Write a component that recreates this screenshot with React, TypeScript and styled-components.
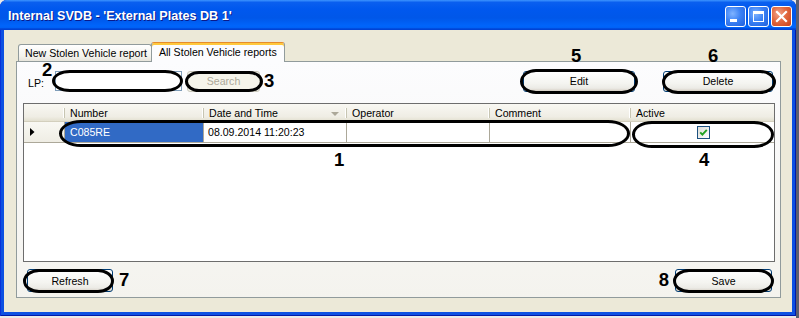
import React from "react";
import styled, { createGlobalStyle, css } from "styled-components";

const GlobalStyle = createGlobalStyle`
  html, body { margin: 0; padding: 0; }
  body { background: #e4e3df; font-family: "Liberation Sans", Arial, sans-serif; }
`;

const UI_FONT = `"Liberation Sans", Arial, sans-serif`;

const Screen = styled.div`
  width: 799px;
  height: 318px;
  overflow: hidden;
  background: linear-gradient(to right, #e9e9e9 0, #e9e9e9 796px, #5b5e6e 796px);
`;

const Window = styled.div`
  width: 796px;
  height: 316px;
  display: flex;
  flex-direction: column;
  background: #0c50e2;
  box-shadow: inset 1px 0 0 #0831d9, inset -1px 0 0 #0019a8, inset 0 -1px 0 #0019a8;
  border-radius: 7px 7px 0 0;
  overflow: hidden;
`;

const TitleBar = styled.div`
  height: 30px;
  flex: none;
  box-sizing: border-box;
  padding: 2px 4px 0 8px;
  display: flex;
  align-items: center;
  background: linear-gradient(
    to bottom,
    #3d95ff 0%,
    #0a5fef 8%,
    #0058ee 30%,
    #0057e9 60%,
    #0065fb 86%,
    #0062f6 92%,
    #0047d9 96%,
    #0040d2 100%
  );
`;

const Title = styled.div`
  flex: 1;
  color: #fff;
  font: bold 12.6px ${UI_FONT};
  text-shadow: 1px 1px 0 #0a1a8a;
  white-space: nowrap;
`;

const Controls = styled.div`
  display: flex;
  gap: 2px;
`;

const CtrlButton = styled.div<{ $close?: boolean }>`
  width: 21px;
  height: 21px;
  box-sizing: border-box;
  border: 1px solid #fff;
  border-radius: 3px;
  display: flex;
  align-items: center;
  justify-content: center;
  background: ${(p) =>
    p.$close
      ? "radial-gradient(circle at 35% 35%, #f0a48c 0%, #e2683f 45%, #c8411a 100%)"
      : "radial-gradient(circle at 35% 35%, #7fb3ff 0%, #3c82f5 45%, #1f5fdc 100%)"};
  svg { display: block; }
`;

const Client = styled.div`
  flex: 1;
  margin: 0 4px 4px 4px;
  background: #ece9d8;
  box-sizing: border-box;
  padding: 12px 11px 14px 12px;
  display: flex;
  flex-direction: column;
`;

const TabStrip = styled.div`
  display: flex;
  align-items: flex-end;
  height: 20px;
  padding-left: 2px;
  margin-bottom: -1px;
  position: relative;
  z-index: 1;
`;

const Tab = styled.div<{ $active?: boolean }>`
  box-sizing: border-box;
  font: 10.6px ${UI_FONT};
  color: #000;
  white-space: nowrap;
  border: 1px solid #919b9c;
  border-bottom: none;
  border-radius: 3px 3px 0 0;
  display: flex;
  align-items: center;
  ${(p) =>
    p.$active
      ? css`
          height: 20px;
          padding: 0 7px 1px 7px;
          background: #fcfcfe;
          border-top: 1px solid #e68b2c;
          box-shadow: inset 0 2px 0 #ffc83c;
          margin-left: -1px;
        `
      : css`
          height: 17px;
          margin-bottom: 1px;
          padding: 0 4px 0 6px;
          background: linear-gradient(#ffffff, #f3f2ec 70%, #e7e5dc);
        `}
`;

const Panel = styled.div`
  flex: 1;
  box-sizing: border-box;
  border: 1px solid #919b9c;
  background: linear-gradient(#fcfcfe, #f4f3ee);
  padding: 7px 5px 5px 6px;
  display: flex;
  flex-direction: column;
`;

const ToolRow = styled.div`
  height: 24px;
  display: flex;
  align-items: center;
`;

const FieldLabel = styled.span`
  font: 10.6px ${UI_FONT};
  color: #000;
  margin-left: 5px;
  width: 27px;
  padding-top: 3px;
`;

const Marked = styled.div<{ $w: number; $h: number }>`
  position: relative;
  width: ${(p) => p.$w}px;
  height: ${(p) => p.$h}px;
  flex: none;
`;

const Ring = styled.div<{ $inset: string; $radius?: string }>`
  position: absolute;
  inset: ${(p) => p.$inset};
  border: 3px solid #000;
  border-radius: ${(p) => p.$radius ?? "16px / 50%"};
  pointer-events: none;
  z-index: 3;
`;

const Num = styled.span`
  font: bold 18.5px ${UI_FONT};
  line-height: 1;
  color: #000;
`;

const FloatNum = styled(Num)<{ $left: number; $top: number }>`
  position: absolute;
  left: ${(p) => p.$left}px;
  top: ${(p) => p.$top}px;
  z-index: 4;
`;

const TextBox = styled.div`
  width: 100%;
  height: 100%;
  box-sizing: border-box;
  border: 1px solid #7f9db9;
  background: #fff;
`;

const Button = styled.div<{ $disabled?: boolean }>`
  width: 100%;
  height: 100%;
  box-sizing: border-box;
  border-radius: 3px;
  display: flex;
  align-items: center;
  justify-content: center;
  font: 10.6px ${UI_FONT};
  ${(p) =>
    p.$disabled
      ? css`
          border: 1px solid #c9c7ba;
          background: #f5f4ea;
          color: #aca899;
        `
      : css`
          border: 1px solid #003c74;
          background: linear-gradient(#ffffff 0%, #f4f4f0 60%, #ecebe6 85%, #d6d0c5 100%);
          color: #000;
        `}
`;

const Spacer = styled.div`
  flex: 1;
`;

const GridBox = styled.div`
  margin-top: 10px;
  height: 159px;
  box-sizing: border-box;
  border: 1px solid #6d6d6d;
  background: #fff;
  position: relative;
  display: grid;
  grid-template-columns: 41px 139px 143px 143px 141px 1fr;
  grid-template-rows: 18px 21px;
  align-content: start;
`;

const HeadCell = styled.div<{ $last?: boolean }>`
  position: relative;
  box-sizing: border-box;
  background: linear-gradient(#f9f8f3, #efede4 75%, #e3e0d0);
  border-bottom: 1px solid #d3cfbd;
  font: 10.6px ${UI_FONT};
  color: #000;
  padding-left: 5px;
  display: flex;
  align-items: center;
  ${(p) =>
    !p.$last &&
    css`
      &::after {
        content: "";
        position: absolute;
        right: 0;
        top: 4px;
        bottom: 3px;
        width: 1px;
        background: #c7c5b2;
        box-shadow: -1px 0 0 #fff;
      }
    `}
`;

const SortGlyph = styled.svg`
  position: absolute;
  right: 8px;
  top: 8px;
`;

const RowHead = styled.div`
  box-sizing: border-box;
  background: linear-gradient(#f9f8f3, #efede4);
  border-right: 1px solid #aca899;
  border-bottom: 1px solid #aca899;
  display: flex;
  align-items: center;
  padding-left: 6px;
`;

const Cell = styled.div<{ $selected?: boolean; $center?: boolean }>`
  box-sizing: border-box;
  border-right: 1px solid #aca899;
  border-bottom: 1px solid #aca899;
  font: 10.6px ${UI_FONT};
  display: flex;
  align-items: center;
  padding-left: 4px;
  white-space: nowrap;
  ${(p) =>
    p.$selected &&
    css`
      background: #316ac5;
      color: #fff;
      padding-left: 5px;
    `}
  ${(p) =>
    p.$center &&
    css`
      justify-content: center;
      padding-left: 0;
      border-right: none;
    `}
`;

const CheckBox = styled.div`
  width: 13px;
  height: 13px;
  box-sizing: border-box;
  border: 1px solid #1c5180;
  background: linear-gradient(135deg, #dcdcd7, #ffffff);
  display: flex;
  align-items: center;
  justify-content: center;
  margin-left: 1px;
  margin-top: 1px;
`;

const BottomRow = styled.div`
  margin-top: 7px;
  height: 23px;
  display: flex;
  align-items: center;
`;

export default function App() {
  return (
    <>
      <GlobalStyle />
      <Screen>
        <Window>
          <TitleBar>
            <Title>Internal SVDB - 'External Plates DB 1'</Title>
            <Controls>
              <CtrlButton>
                <svg width="19" height="19" viewBox="0 0 19 19">
                  <rect x="4" y="12" width="7" height="3" fill="#fff" />
                </svg>
              </CtrlButton>
              <CtrlButton>
                <svg width="19" height="19" viewBox="0 0 19 19">
                  <rect x="4.5" y="4.5" width="10" height="10" fill="none" stroke="#fff" strokeWidth="1" />
                  <rect x="4" y="4" width="11" height="3" fill="#fff" />
                </svg>
              </CtrlButton>
              <CtrlButton $close>
                <svg width="19" height="19" viewBox="0 0 19 19">
                  <path d="M5 5 L14 14 M14 5 L5 14" stroke="#fff" strokeWidth="2.2" strokeLinecap="square" />
                </svg>
              </CtrlButton>
            </Controls>
          </TitleBar>
          <Client>
            <TabStrip>
              <Tab>New Stolen Vehicle report</Tab>
              <Tab $active>All Stolen Vehicle reports</Tab>
            </TabStrip>
            <Panel>
              <ToolRow>
                <FieldLabel>LP:</FieldLabel>
                <Marked $w={127} $h={20}>
                  <TextBox />
                  <Ring $inset="-1px -1px -1px -3px" $radius="18px / 50%" />
                  <FloatNum $left={-13} $top={-10}>2</FloatNum>
                </Marked>
                <Marked $w={73} $h={21} style={{ marginLeft: 5 }}>
                  <Button $disabled>Search</Button>
                  <Ring $inset="0 -3px 0 -2px" $radius="14px / 50%" />
                </Marked>
                <Num style={{ marginLeft: 4 }}>3</Num>
                <Spacer />
                <Marked $w={112} $h={21} style={{ marginRight: 28 }}>
                  <Button>Edit</Button>
                  <Ring $inset="-2px -3px -2px -3px" />
                  <FloatNum $left={48} $top={-24}>5</FloatNum>
                </Marked>
                <Marked $w={110} $h={21} style={{ marginRight: 2 }}>
                  <Button>Delete</Button>
                  <Ring $inset="-1px -3px -2px -1px" />
                  <FloatNum $left={45} $top={-24}>6</FloatNum>
                </Marked>
              </ToolRow>

              <GridBox>
                <HeadCell />
                <HeadCell>Number</HeadCell>
                <HeadCell>
                  Date and Time
                  <SortGlyph width="8" height="4" viewBox="0 0 8 4">
                    <polygon points="0,0 8,0 4,4" fill="#aca899" />
                  </SortGlyph>
                </HeadCell>
                <HeadCell>Operator</HeadCell>
                <HeadCell>Comment</HeadCell>
                <HeadCell $last>Active</HeadCell>

                <RowHead>
                  <svg width="5" height="8" viewBox="0 0 5 8">
                    <polygon points="0,0 4.5,4 0,8" fill="#000" />
                  </svg>
                </RowHead>
                <Cell $selected>C085RE</Cell>
                <Cell>08.09.2014 11:20:23</Cell>
                <Cell />
                <Cell />
                <Cell $center>
                  <CheckBox>
                    <svg width="9" height="9" viewBox="0 0 9 9">
                      <path d="M1.2 4.3 L3.4 6.6 L7.8 1.8" fill="none" stroke="#21a121" strokeWidth="1.9" />
                    </svg>
                  </CheckBox>
                </Cell>

                <Ring $inset="16px auto auto 35px" $radius="22px / 50%" style={{ width: 571, height: 27, boxSizing: "border-box" }} />
                <Ring $inset="17px auto auto 608px" $radius="20px / 50%" style={{ width: 142, height: 27, boxSizing: "border-box" }} />
                <FloatNum $left={310} $top={47}>1</FloatNum>
                <FloatNum $left={675} $top={47}>4</FloatNum>
              </GridBox>

              <BottomRow>
                <Marked $w={86} $h={23} style={{ marginLeft: 4 }}>
                  <Button>Refresh</Button>
                  <Ring $inset="0 -1px -1px -4px" />
                </Marked>
                <Num style={{ marginLeft: 6 }}>7</Num>
                <Spacer />
                <Num style={{ marginRight: 6 }}>8</Num>
                <Marked $w={97} $h={23} style={{ marginRight: 3 }}>
                  <Button>Save</Button>
                  <Ring $inset="0 -2px -1px -2px" />
                </Marked>
              </BottomRow>
            </Panel>
          </Client>
        </Window>
      </Screen>
    </>
  );
}
